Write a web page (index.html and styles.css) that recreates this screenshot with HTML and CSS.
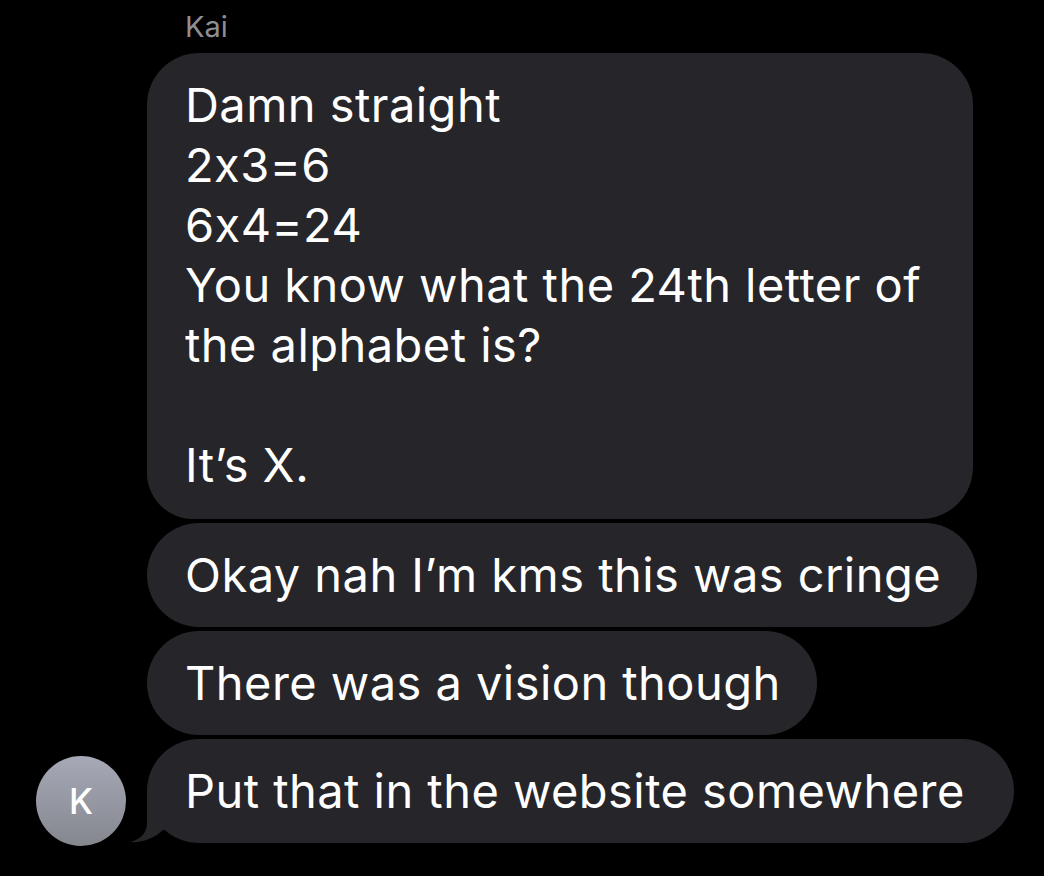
FILE: index.html
```html
<!DOCTYPE html>
<html>
<head>
<meta charset="utf-8">
<link rel="stylesheet" href="styles.css">
</head>
<body>
<div class="thread">
  <div class="sender">Kai</div>
  <div class="row">
    <div class="avatar-slot"></div>
    <div class="bubble first">Damn straight<br>2x3=6<br>6x4=24<br>You know what the 24th letter of<br>the alphabet is?<br><br>It’s X.</div>
  </div>
  <div class="row">
    <div class="avatar-slot"></div>
    <div class="bubble mid">Okay nah I’m kms this was cringe</div>
  </div>
  <div class="row">
    <div class="avatar-slot"></div>
    <div class="bubble mid">There was a vision though</div>
  </div>
  <div class="row">
    <div class="avatar-slot"><div class="avatar">K</div></div>
    <div class="bubble last">Put that in the website somewhere<svg class="tail" width="40" height="50" viewBox="0 0 40 50"><path d="M17 0 L17 30 C17 40 10 47 0 49 C12 50 25 45 33 37 L40 37 L40 0 Z" fill="#26252a"/></svg></div>
  </div>
</div>
</body>
</html>
```
FILE: styles.css
```css
html, body {
  margin: 0;
  padding: 0;
  background: #000;
}
body {
  width: 1044px;
  height: 876px;
  overflow: hidden;
  font-family: Inter, "Liberation Sans", sans-serif;
  color: #fff;
}
.thread {
  display: flex;
  flex-direction: column;
  gap: 4px;
  padding-top: 9px;
}
.sender {
  margin-left: 185px;
  font-size: 29px;
  line-height: 36px;
  color: #8e8e93;
  margin-bottom: 4px;
}
.row {
  display: flex;
  align-items: flex-end;
}
.avatar-slot {
  width: 147px;
  flex: none;
  display: flex;
  justify-content: flex-start;
}
.avatar {
  margin-left: 36px;
  margin-bottom: -3px;
  width: 90px;
  height: 90px;
  border-radius: 50%;
  background: linear-gradient(#a6a9b6, #85878f);
  display: flex;
  align-items: center;
  justify-content: center;
  font-size: 35px;
  font-weight: 500;
  color: #fff;
}
.bubble {
  position: relative;
  background: #26252a;
  font-size: 47px;
  line-height: 60px;
  padding: 22px 36px 22px 38px;
  border-radius: 52px;
  letter-spacing: 0.45px;
  white-space: nowrap;
}
.bubble.first {
  padding-right: 52px;
  padding-bottom: 24px;
  border-radius: 52px 52px 52px 46px;
}
.bubble.last {
  padding-right: 49px;
}
.tail {
  position: absolute;
  left: -17px;
  bottom: 0;
  width: 40px;
  height: 50px;
}
```
